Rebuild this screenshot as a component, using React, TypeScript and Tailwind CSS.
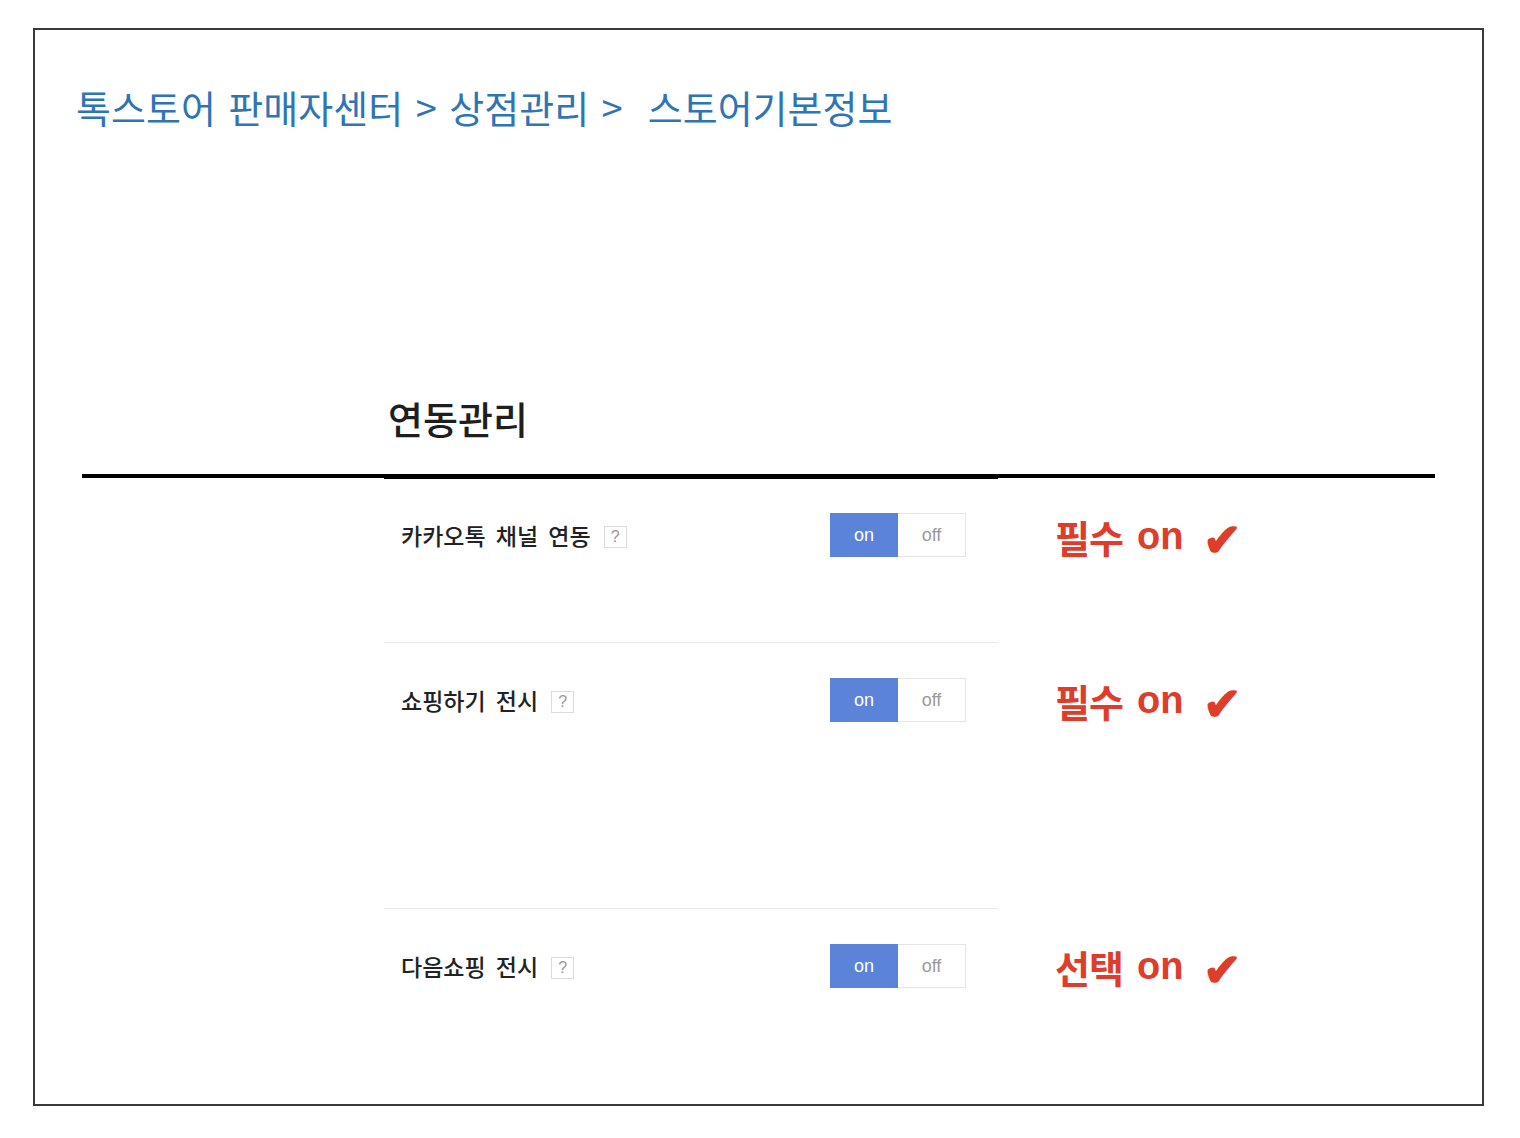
import React from 'react';

const KR = { fontFamily: '"Noto Sans CJK KR", "Noto Sans", sans-serif' };
const LAT = { fontFamily: '"Liberation Sans", "Noto Sans CJK KR", sans-serif' };

type Row = { label: string; note: string; pad: string };

const rows: Row[] = [
    { label: '카카오톡 채널 연동', note: '필수', pad: 'h-[164px] border-t border-black' },
    { label: '쇼핑하기 전시', note: '필수', pad: 'h-[266px] border-t border-[#e8ecee]' },
    { label: '다음쇼핑 전시', note: '선택', pad: 'h-[150px] border-t border-[#e8ecee]' },
];

function Toggle() {
    return (
        <div className="flex h-[44px] w-[136px]" style={LAT}>
            <div className="flex w-[68px] items-center justify-center bg-[#5b83d8] text-[18px] text-white">on</div>
            <div className="flex w-[68px] items-center justify-center border border-l-0 border-[#e6e6e6] bg-white text-[18px] text-[#9a9a9a]">off</div>
        </div>
    );
}

export default function App() {
    return (
        <div className="min-h-[1138px] w-[1520px] bg-white pl-[33px] pt-[28px]">
            <div className="flex h-[1078px] w-[1451px] flex-col border-2 border-[#3a3a3a]">
                <h1 className="mt-[52px] ml-[41px] text-[38px] leading-[50px] text-[#2f74b5] [word-spacing:4px]" style={KR}>
                    톡스토어 판매자센터 &gt; 상점관리 &gt;&nbsp; 스토어기본정보
                </h1>

                <h2 className="mt-[261px] ml-[353px] text-[38px] leading-[50px] font-medium text-[#1e1e1e]" style={KR}>
                    연동관리
                </h2>

                <div className="mt-[31px] ml-[47px] h-[4px] w-[1353px] bg-black" />

                <div className="ml-[349px] flex flex-col">
                    {rows.map((r, i) => (
                        <div key={r.label} className="flex">
                            <div className={`w-[614px] ${r.pad}`}>
                                <div className={`flex items-center ${i === 0 ? 'pt-[34px]' : 'pt-[35px]'}`}>
                                    <div className="flex h-[44px] w-[446px] items-center pl-[17px]">
                                        <span className="text-[23px] font-medium text-[#222] [word-spacing:5px]" style={KR}>{r.label}</span>
                                        <span className="ml-[13px] mt-[3px] flex h-[22px] w-[23px] items-center justify-center border border-[#dcdcdc] text-[16px] text-[#999]" style={LAT}>?</span>
                                    </div>
                                    <Toggle />
                                </div>
                            </div>
                            <div className="ml-[57px] mt-[36px] flex h-[44px] items-center text-[38px] font-bold text-[#dd3d2a]">
                                <span style={KR} className="tracking-[-1px]">{r.note}</span>
                                <span style={LAT} className="ml-[14px]">on</span>
                                <span style={KR} className="ml-[20px] text-[46px] leading-none">✔</span>
                            </div>
                        </div>
                    ))}
                </div>
            </div>
        </div>
    );
}
